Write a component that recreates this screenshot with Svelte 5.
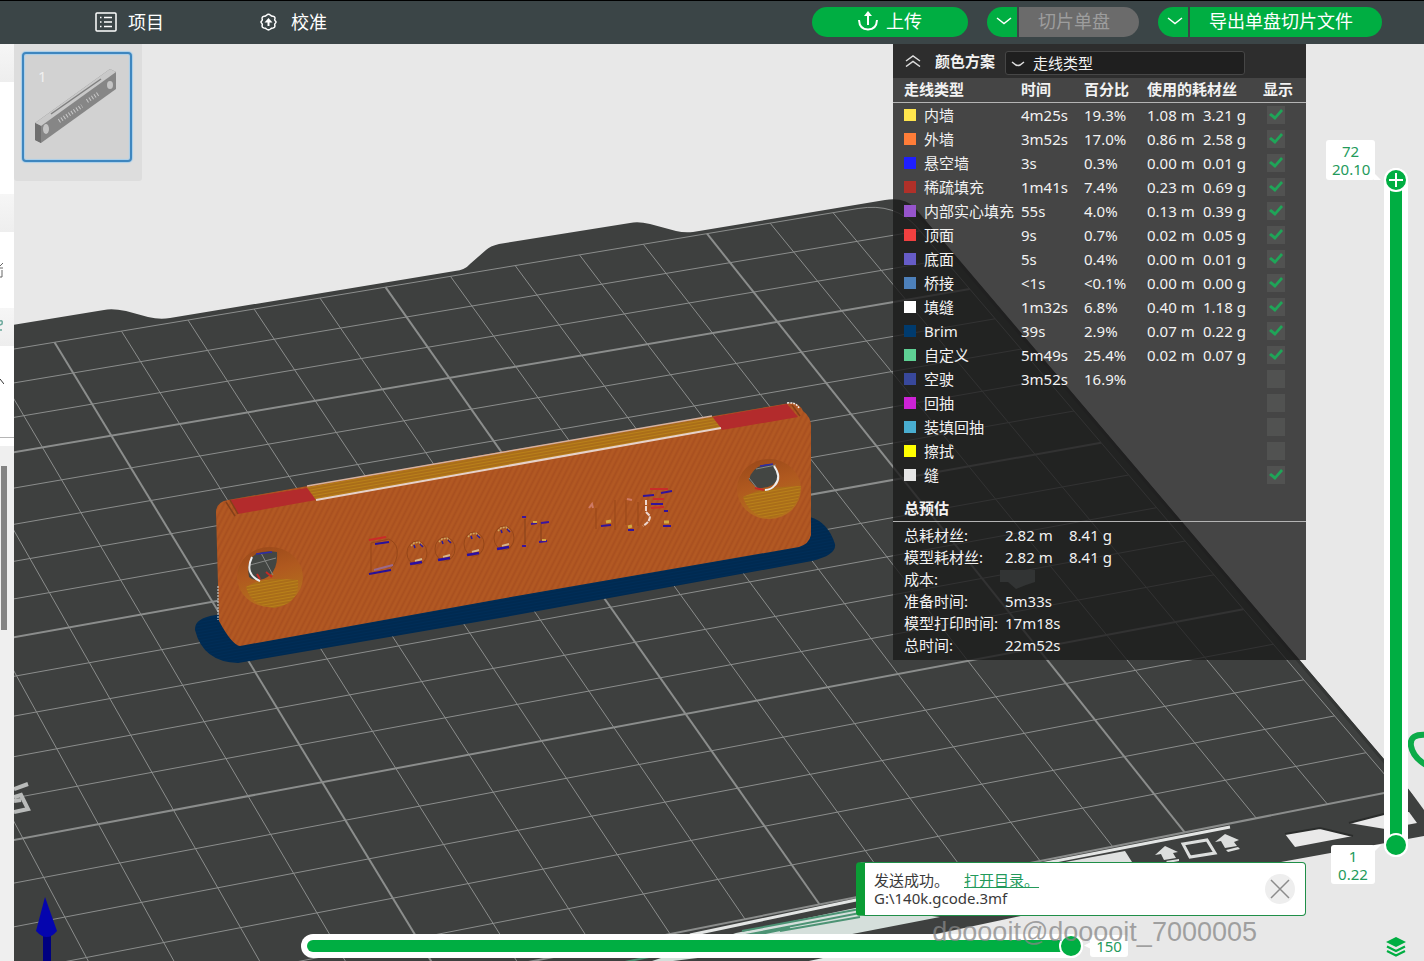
<script lang="ts">
	type LineType = {
		name: string;
		color: string;
		time?: string;
		percent?: string;
		length?: string;
		weight?: string;
		visible: boolean;
	};

	let lineTypes = $state<LineType[]>([
		{ name: '内墙', color: '#ffe54d', time: '4m25s', percent: '19.3%', length: '1.08 m', weight: '3.21 g', visible: true },
		{ name: '外墙', color: '#ff7d38', time: '3m52s', percent: '17.0%', length: '0.86 m', weight: '2.58 g', visible: true },
		{ name: '悬空墙', color: '#1f1fff', time: '3s', percent: '0.3%', length: '0.00 m', weight: '0.01 g', visible: true },
		{ name: '稀疏填充', color: '#b03029', time: '1m41s', percent: '7.4%', length: '0.23 m', weight: '0.69 g', visible: true },
		{ name: '内部实心填充', color: '#9654cc', time: '55s', percent: '4.0%', length: '0.13 m', weight: '0.39 g', visible: true },
		{ name: '顶面', color: '#f04040', time: '9s', percent: '0.7%', length: '0.02 m', weight: '0.05 g', visible: true },
		{ name: '底面', color: '#665cc7', time: '5s', percent: '0.4%', length: '0.00 m', weight: '0.01 g', visible: true },
		{ name: '桥接', color: '#4d80ba', time: '<1s', percent: '<0.1%', length: '0.00 m', weight: '0.00 g', visible: true },
		{ name: '填缝', color: '#ffffff', time: '1m32s', percent: '6.8%', length: '0.40 m', weight: '1.18 g', visible: true },
		{ name: 'Brim', color: '#003b6e', time: '39s', percent: '2.9%', length: '0.07 m', weight: '0.22 g', visible: true },
		{ name: '自定义', color: '#5ed194', time: '5m49s', percent: '25.4%', length: '0.02 m', weight: '0.07 g', visible: true },
		{ name: '空驶', color: '#38489b', time: '3m52s', percent: '16.9%', visible: false },
		{ name: '回抽', color: '#cd22d6', visible: false },
		{ name: '装填回抽', color: '#49adcf', visible: false },
		{ name: '擦拭', color: '#ffff00', visible: false },
		{ name: '缝', color: '#e6e6e6', visible: true }
	]);

	const totals = [
		{ label: '总耗材丝:', value: '2.82 m', extra: '8.41 g' },
		{ label: '模型耗材丝:', value: '2.82 m', extra: '8.41 g' },
		{ label: '成本:', value: '', extra: '' },
		{ label: '准备时间:', value: '5m33s', extra: '' },
		{ label: '模型打印时间:', value: '17m18s', extra: '' },
		{ label: '总时间:', value: '22m52s', extra: '' }
	];

	let topLayer = $state(72);
	let bottomLayer = $state(1);
	let move = $state(150);
	let toastOpen = $state(true);
	let panelOpen = $state(true);

	// bed coordinates (cells of 10 mm) -> screen, simple perspective camera
	function project(col: number, row: number): string {
		const u = col / 10;
		const v = row / 18;
		const w = 1 + 0.02927 * u - 0.14027 * v;
		const x = (673.2 * u + 325.5 * v + 54.5) / w;
		const y = (-101.76 * u + 499.4 * v + 342.3) / w;
		return `${x.toFixed(1)} ${y.toFixed(1)}`;
	}

	const columns = Array.from({ length: 17 }, (_, i) => i - 4);
	const rows = Array.from({ length: 18 }, (_, i) => i + 1);

	// centres of the four round engraved letters
	const rings = [
		[417, 553],
		[445, 549],
		[474, 544],
		[504, 538]
	];
</script>

<div class="app">
	<header>
		<nav>
			<button class="tab">
				<svg width="22" height="20" viewBox="0 0 22 20" fill="none" stroke="#fff" stroke-width="1.5">
					<rect x="1" y="1" width="20" height="18" rx="1" />
					<path d="M9 5.5h8M9 10h8M9 14.5h8M5 5.5h1.5M5 10h1.5M5 14.5h1.5" />
				</svg>
				项目
			</button>
			<button class="tab">
				<svg class="gear" width="17" height="18" viewBox="0 0 17 18" fill="none" stroke="#fff" stroke-width="1.5">
					<path d="M6.500 2.200Q8.500 .4 10.500 2.200Q11.500 3.300 13 3.200Q15.500 3.500 14.800 6Q14.400 7.300 15.500 8.200Q16.500 9 15.500 10Q14.400 11 14.800 12.200Q15.300 14.700 13 14.900Q11.500 14.900 10.500 16Q8.500 17.700 6.500 16Q5.500 14.900 4 14.900Q1.700 14.700 2.200 12.200Q2.600 11 1.500 10Q.5 9 1.500 8.200Q2.600 7.300 2.200 6Q1.700 3.500 4 3.200Q5.500 3.300 6.500 2.200Z" />
					<path d="M8.5 13V7" stroke-width="2" />
					<path d="M4.5 9.500L8.500 5L12.500 9.500Z" fill="#fff" stroke="none" />
				</svg>
				校准
			</button>
		</nav>
		<div class="actions">
			<button class="pill upload">
				<svg width="20" height="22" viewBox="0 0 20 22" fill="none" stroke="#fff" stroke-width="2">
					<path d="M1 10Q1.500 19.500 10 19.500T19 10M10 15V4" />
					<path d="M6 6L10 1L14 6Z" fill="#fff" stroke="none" />
				</svg>
				上传
			</button>
			<div class="split">
				<button class="drop" aria-label="切片">
					<svg width="16" height="8" viewBox="0 0 16 8" fill="none" stroke="#fff" stroke-width="1.5"><path d="M1 1L8 6.500L15 1" /></svg>
				</button>
				<button class="main slice" disabled>切片单盘</button>
			</div>
			<div class="split">
				<button class="drop" aria-label="导出">
					<svg width="16" height="8" viewBox="0 0 16 8" fill="none" stroke="#fff" stroke-width="1.5"><path d="M1 1L8 6.500L15 1" /></svg>
				</button>
				<button class="main export">导出单盘切片文件</button>
			</div>
		</div>
	</header>

	<div class="workspace">
		<aside>
			<div class="band"></div>
			<div class="first"></div>
			<div class="band"></div>
			<div class="second">
				<svg width="4" height="20" viewBox="0 0 4 20" fill="none" stroke="#666"><path d="M0 4L3 1M0 6H3M2 8V15H0" /></svg>
			</div>
			<div class="band">
				<svg width="4" height="20" viewBox="0 0 4 20" fill="none" stroke="#6aa89b" stroke-width="1.5"><path d="M0 7Q3 6 2 10L0 11M0 16H2" /></svg>
			</div>
			<div class="third">
				<svg width="4" height="8" viewBox="0 0 4 8" fill="none" stroke="#333"><path d="M0 1L4 6" /></svg>
			</div>
			<div class="scroll"><div class="scrollbar"></div></div>
		</aside>

		<main>
			<svg class="scene" viewBox="14 44 1410 917" preserveAspectRatio="xMinYMin slice" aria-hidden="true">
				<defs>
					<pattern id="wall" width="5" height="8" patternUnits="userSpaceOnUse" patternTransform="rotate(27)">
						<rect width="5" height="8" fill="#ae5421" />
						<path d="M1 0V8" stroke="#b75d24" stroke-width="1" />
						<path d="M3.5 0V8" stroke="#a85020" stroke-width="1" />
					</pattern>
					<pattern id="layers" width="8" height="3" patternUnits="userSpaceOnUse" patternTransform="rotate(-10)">
						<rect width="8" height="3" fill="#b98019" />
						<path d="M0 1H8" stroke="#9c5b18" stroke-width="1" />
					</pattern>
					<pattern id="brim" width="8" height="3" patternUnits="userSpaceOnUse" patternTransform="rotate(-10)">
						<rect width="8" height="3" fill="#002d57" />
						<path d="M0 1H8" stroke="#00264b" />
					</pattern>
					<linearGradient id="cone" x1="0" y1="0" x2="0.3" y2="1">
						<stop offset="0" stop-color="#984719" />
						<stop offset="0.5" stop-color="#b0591f" />
						<stop offset="1" stop-color="#b4701d" />
					</linearGradient>
				</defs>

				<path
					d="M0 327L104 310Q112 308 126 311L148 317Q160 320 170 318L455 271Q465 270 470 264L486 250Q490 246 499 244L630 223Q638 221 650 224L676 231Q684 233 693 232L885 200Q905 197 915 208L1395 772L1424 808V836L1281 862L1016 917L790 965H0Z"
					fill="#3e403f"
				/>
				<path d="M916 212L1393 772" fill="none" stroke="#343635" stroke-width="3" />

				<g fill="none" stroke="#8b8d8c">
					{#each columns as c}
						<path d="M{project(c, 0)}L{project(c, 18)}" stroke-width={c % 5 === 0 ? 2 : 1} />
					{/each}
					{#each rows as r}
						<path d="M{project(-5, r)}L{project(13, r)}" stroke-width={r % 5 === 3 ? 2 : 1} />
					{/each}
					<path d="M{project(-5, 0)}L{project(12.4, 0)}Q{project(13, 0)} {project(13, 0.9)}L{project(13, 18)}" />
				</g>

				<!-- front strip of the plate -->
				<path d="M690 935L856 900L1230 827" stroke="#e3e5e4" stroke-width="3" fill="none" />
				<path d="M736 933L860 907L940 917L780 948L640 965Z" fill="#d5dfdb" />
				<path d="M742 931L860 909M740 936L860 913M620 963L790 928M780 931L860 917" stroke="#4c9374" stroke-width="2" fill="none" />
				<path d="M1060 863L1125 851L1132 862V870H1060Z" fill="#dfe1e0" />
				<g fill="#dcdedd">
					<path d="M1165 846L1178 852L1173 853L1176 858L1164 860L1161 854L1155 855Z" />
					<path d="M1166 861L1179 859V861L1168 863Z" />
					<path d="M1225 834L1239 840L1234 842L1237 846L1225 848L1221 841L1215 842Z" />
					<path d="M1226 850L1238 847L1240 849L1228 852Z" />
					<path d="M1285 834L1320 828L1353 836L1295 847Z" fill="#e9e9e9" />
					<path d="M1349 823L1388 813L1409 812L1417 823L1385 829Z" fill="#e9e9e9" />
				</g>
				<path d="M1183 844L1207 840L1215 853L1190 857Z" fill="none" stroke="#dcdedd" stroke-width="3" />
				<path d="M1285 834L1320 828L1353 836M1349 823L1384 814" fill="none" stroke="#2b2d2c" stroke-width="2" />
				<path d="M14 789L28 784M14 797L21 795L28 809L14 812M14 801L21 800" fill="none" stroke="#b9bbba" stroke-width="4" />
				<path d="M1408 788L1424 810V750H1408Z" fill="#e8e8e8" />
				<path d="M1428 735Q1409 733 1411 746Q1413 758 1428 766" fill="none" stroke="#0bab48" stroke-width="6" />

				<!-- brim -->
				<path
					d="M216 615Q194 618 195 630Q203 662 238 663L500 618L812 561Q837 555 835 544Q828 522 810 517Z"
					fill="url(#brim)"
				/>

				<!-- printed part -->
				<path
					d="M216 512Q216 502 228 500L500 452L790 403Q799 402 803 411Q811 417 811 426V535Q809 544 799 547L500 599L240 646Q232 645 219 621Z"
					fill="url(#wall)"
				/>
				<path d="M230 500L307 488L316 500L238 514Z" fill="#b32b2c" />
				<path d="M713 417L787 404L798 417L722 430Z" fill="#b32b2c" />
				<path d="M307 487L712 417L721 428L316 500Z" fill="url(#layers)" />
				<path d="M307 486L712 416" stroke="#d5b3a0" stroke-width="1.5" />
				<path d="M316 500L721 428" stroke="#e6d2ca" stroke-width="2" />
				<path d="M226 502L235 516M230 500L238 514" stroke="#84401a" stroke-width="1.5" />
				<path d="M792 405L800 416" stroke="#84401a" stroke-width="1.5" />
				<path d="M787 403Q796 402 799 408" fill="none" stroke="#eee" stroke-width="1.5" stroke-dasharray="2 1" />
				<path d="M218 586V620" stroke="#ddd" stroke-width="1" stroke-dasharray="2 1" />

				<ellipse cx="270" cy="577" rx="33" ry="30" fill="url(#cone)" />
				<path d="M246 587Q262 576 298 580Q300 604 274 608Q251 606 246 587Z" fill="url(#layers)" />
				<path d="M249 577Q246 560 256 554Q265 550 277 552Q278 568 270 575Q262 582 252 579Z" fill="#434643" />
				<path d="M261 553L273 575M250 565L276 558" stroke="#858785" />
				<path d="M252 557Q244 574 260 581" fill="none" stroke="#eee" stroke-width="2" />
				<path d="M256 554L272 552" stroke="#302ca8" stroke-width="1.5" />
				<path d="M257 574L260 579M266 572L272 577" stroke="#c62a25" stroke-width="2" />

				<ellipse cx="769" cy="489" rx="32" ry="30" fill="url(#cone)" />
				<path d="M743 497Q760 487 801 486Q800 512 771 518Q749 516 743 497Z" fill="url(#layers)" />
				<path d="M749 480Q752 466 768 464Q779 465 778 478Q774 489 757 488Z" fill="#434643" />
				<path d="M749 478L757 488M756 469L776 465" stroke="#858785" />
				<path d="M774 466Q782 477 775 485Q771 490 765 490" fill="none" stroke="#eee" stroke-width="2" />
				<path d="M760 466L773 464" stroke="#302ca8" stroke-width="1.5" />
				<path d="M755 488L764 490" stroke="#c62a25" stroke-width="2" />

				<!-- engraving -->
				<path d="M371 543L389 539Q399 544 397 556Q395 566 389 570L371 574Z" fill="none" stroke="#974719" />
				<path d="M369 540L386 537" stroke="#cb2a28" stroke-width="2" />
				<path d="M375 544L389 542M369 574L391 570" stroke="#27109b" stroke-width="2" />
				<path d="M374 570L393 565" stroke="#9a698d" stroke-width="2" />
				{#each rings as [x, y]}
					<ellipse cx={x} cy={y} rx="10" ry="12" fill="none" stroke="#974719" />
					<path d="M{x - 6} {y - 7}l3 -3l5 -1l3 3" fill="none" stroke="#cfa862" stroke-width="1.5" stroke-dasharray="2 1" />
					<path d="M{x - 3} {y - 8}l1 3M{x + 3} {y - 9}l3 3" stroke="#2c1a9a" stroke-width="1.5" />
					<path d="M{x - 2} {y + 8}l7 -2" stroke="#d6b689" stroke-width="2" />
					<path d="M{x - 7} {y + 11}l12 -2" stroke="#2a0fa4" stroke-width="2.5" />
				{/each}
				<path d="M525 519V544M541 522V541" stroke="#84401a" />
				<path d="M522 517h4M522 546h4M531 524l6 -1M541 523l8 -1M539 542l8 -1" stroke="#3b159d" stroke-width="2" />
				<path d="M533 522h4M542 540h4" stroke="#d2a942" stroke-width="2" />
				<path d="M596 508V529M615 500V530M626 500V525M638 502V526" stroke="#974719" />
				<path d="M589 508l3 -4l1 4M627 499l5 1" fill="none" stroke="#cf7a64" stroke-width="2" />
				<path d="M601 526l10 -1M628 530h6M663 526h8M643 496l11 -1M661 493l11 -2M651 504h12M664 511h4" stroke="#32139b" stroke-width="2" />
				<path d="M606 522l5 -1M628 527l4 -1M664 522h5" stroke="#d2a942" stroke-width="3" />
				<path d="M646 500V512L650 516Q650 522 643 526" fill="none" stroke="#eed7cf" stroke-width="2" stroke-dasharray="5 1" />
				<path d="M650 489h18M651 508l13 -1M653 499h11" stroke="#c92c29" stroke-width="2" />

				<!-- z axis -->
				<path d="M43 934H51V961H43Z" fill="#000080" />
				<path d="M45 897L57 931Q47 943 36 931Z" fill="#0505ae" />
			</svg>

			<button class="plate" aria-label="1">
				<span class="plate-frame">
					<span class="plate-number">1</span>
					<svg width="106" height="106" viewBox="24 54 106 106">
						<path d="M35 123L110 69L116 72V89L41 143L35 140Z" fill="#868686" />
						<path d="M35 123L110 69L116 72L41 126Z" fill="#c9c9c9" />
						<path d="M51 114L101 79" stroke="#808080" stroke-width="1.5" />
						<path d="M35 123L41 126V143L35 140Z" fill="#6f6f6f" />
						<ellipse cx="46" cy="129" rx="3" ry="5" fill="#c4c4c4" />
						<ellipse cx="110" cy="85" rx="3" ry="4" fill="#c4c4c4" />
						<path d="M59 121L82 106M87 101L98 94" stroke="#c9c9c9" stroke-width="4" stroke-dasharray="1 2" />
					</svg>
				</span>
			</button>

			<section class="panel">
				<div class="panel-head">
					<button class="collapse" aria-label="折叠" onclick={() => (panelOpen = !panelOpen)}>
						<svg width="16" height="12" viewBox="0 0 16 12" fill="none" stroke="#ddd" stroke-width="1.5"><path d="M1 6L8 1L15 6M1 11.5L8 6.5L15 11.5" /></svg>
					</button>
					<label for="scheme">颜色方案</label>
					<div class="select">
						<svg width="14" height="6" viewBox="0 0 14 6" fill="none" stroke="#ddd" stroke-width="1.5"><path d="M1 1L5 4Q7 5 9 4L13 1" /></svg>
						<select id="scheme">
							<option>走线类型</option>
						</select>
					</div>
				</div>
				{#if panelOpen}
					<table class="types">
						<colgroup>
							<col class="c-name" />
							<col class="c-time" />
							<col class="c-time" />
							<col class="c-length" />
							<col class="c-weight" />
							<col />
						</colgroup>
						<thead>
							<tr>
								<th class="name">走线类型</th>
								<th>时间</th>
								<th>百分比</th>
								<th colspan="2">使用的耗材丝</th>
								<th>显示</th>
							</tr>
						</thead>
						<tbody>
							{#each lineTypes as t}
								<tr>
									<td class="name"><i style="background: {t.color}"></i>{t.name}</td>
									<td>{t.time ?? ''}</td>
									<td>{t.percent ?? ''}</td>
									<td>{t.length ?? ''}</td>
									<td>{t.weight ?? ''}</td>
									<td class="show"><input type="checkbox" aria-label={t.name} bind:checked={t.visible} /></td>
								</tr>
							{/each}
						</tbody>
					</table>
					<h2>总预估</h2>
					<table class="totals">
						<tbody>
							{#each totals as t}
								<tr>
									<th>{t.label}</th>
									<td>
										{#if t.label === '成本:'}
											<svg width="40" height="20" viewBox="0 0 40 20"><path d="M-5 1H35V13L26 16L16 20L8 13H-5Z" fill="#323434" /></svg>
										{:else}
											{t.value}
										{/if}
									</td>
									<td>{t.extra}</td>
								</tr>
							{/each}
						</tbody>
					</table>
				{/if}
			</section>

			<div class="layer-slider">
				<output class="tip upper">72<br />20.10</output>
				<output class="tip lower">1<br />0.22</output>
				<div class="bar"></div>
				<input class="high" type="range" min="1" max="72" aria-label="72" bind:value={topLayer} />
				<input type="range" min="1" max="72" aria-label="1" bind:value={bottomLayer} />
			</div>

			<div class="move-slider">
				<div class="bar"></div>
				<input type="range" min="0" max="150" aria-label="150" bind:value={move} />
				<output class="tip">{move}</output>
			</div>

			{#if toastOpen}
				<div class="toast" role="status">
					<div>
						<p>发送成功。<a href="#folder">打开目录。</a></p>
						<p>G:\140k.gcode.3mf</p>
					</div>
					<button aria-label="关闭" onclick={() => (toastOpen = false)}>
						<svg width="20" height="20" viewBox="0 0 20 20" stroke="#8c8c8c" stroke-width="1.5"><path d="M1 1L19 19M19 1L1 19" /></svg>
					</button>
				</div>
			{/if}

			<button class="layers" aria-label="图层">
				<svg width="20" height="20" viewBox="0 0 20 20">
					<path d="M10 0L20 5L10 10L0 5Z" fill="#00ae42" />
					<path d="M1 9.5L10 14L19 9.5M1 14L10 18.5L19 14" fill="none" stroke="#00ae42" stroke-width="2.2" />
				</svg>
			</button>

			<div class="watermark">dooooit@dooooit_7000005</div>
		</main>
	</div>
</div>

<style>
	:global(body) {
		background: #e8e8e8;
	}

	.app {
		display: flex;
		flex-direction: column;
		height: 100vh;
		min-height: 760px;
		overflow: hidden;
		font-family: 'Noto Sans', 'Noto Sans CJK SC', sans-serif;
		font-size: 15px;
	}

	button {
		font: inherit;
		color: inherit;
		border: 0;
		padding: 0;
		background: none;
		display: flex;
		align-items: center;
		justify-content: center;
	}

	header {
		box-sizing: border-box;
		flex: none;
		height: 44px;
		display: flex;
		align-items: center;
		justify-content: space-between;
		padding: 0 42px 2px 95px;
		border-top: 1px solid #000;
		background: #3b4547;
		color: #fff;
		font-size: 18px;
	}

	nav {
		display: flex;
		gap: 96px;
	}

	.tab {
		gap: 11px;
		line-height: 26px;
	}

	.gear {
		margin-right: 3px;
	}

	.actions {
		display: flex;
		gap: 19px;
	}

	.pill,
	.drop,
	.main {
		height: 30px;
		padding-bottom: 2px;
		background: #00ae42;
		color: #fff;
		line-height: 26px;
	}

	.upload {
		width: 156px;
		gap: 8px;
		border-radius: 15px;
	}

	.split {
		display: flex;
		gap: 2px;
	}

	.drop {
		width: 30px;
		padding-left: 4px;
		border-radius: 15px 0 0 15px;
	}

	.main {
		border-radius: 0 15px 15px 0;
	}

	.slice {
		width: 120px;
		padding-right: 10px;
		background: #6b6b6b;
		color: #9d9d9d;
	}

	.export {
		width: 192px;
		padding-right: 10px;
	}

	.workspace {
		flex: 1;
		display: flex;
		min-height: 0;
	}

	aside {
		flex: none;
		width: 14px;
		display: flex;
		flex-direction: column;
		background: #fff;
	}

	aside > div {
		box-sizing: border-box;
	}

	aside svg {
		display: block;
	}

	.band {
		height: 38px;
		padding-top: 6px;
		background: linear-gradient(#f6f6f6, #eeeeee);
	}

	.first {
		height: 112px;
	}

	.second {
		height: 76px;
		padding-top: 30px;
	}

	.third {
		height: 92px;
		padding-top: 32px;
		border-bottom: 1px solid #b5b5b5;
	}

	.scroll {
		flex: 1;
		margin-top: 8px;
		padding: 20px 0 0 1px;
		background: #efefef;
	}

	.scrollbar {
		width: 6px;
		height: 164px;
		background: #838383;
	}

	main {
		position: relative;
		flex: 1;
		min-width: 0;
		overflow: hidden;
		background: #e8e8e8;
	}

	.scene {
		display: block;
		width: 100%;
		height: 100%;
	}

	.plate {
		position: absolute;
		top: 0;
		left: 0;
		width: 128px;
		height: 137px;
		padding: 8px;
		align-items: flex-start;
		justify-content: flex-start;
		border-radius: 0 0 3px 3px;
		background: #dddddd;
	}

	.plate-frame {
		position: relative;
		display: block;
		width: 106px;
		height: 106px;
		border: 2px solid #3e86bf;
		border-radius: 4px;
		background: #d2d2d2;
		box-shadow: 0 0 1px 1px #a9cfea, inset 0 0 1px 1px #a9cfea;
	}

	.plate-frame svg {
		display: block;
	}

	.plate-number {
		position: absolute;
		top: 12px;
		left: 14px;
		line-height: 20px;
		color: #f0f0f0;
	}

	.panel {
		position: absolute;
		top: 0;
		right: 118px;
		width: 413px;
		box-sizing: border-box;
		padding-bottom: 4px;
		background: rgba(27, 27, 27, 0.8);
		color: #f2f2f2;
	}

	.panel-head {
		display: flex;
		align-items: center;
		height: 34px;
		background: rgba(25, 25, 25, 0.55);
	}

	.collapse {
		width: 16px;
		margin: 0 14px 0 12px;
	}

	.panel-head label {
		width: 70px;
		line-height: 24px;
		font-weight: 700;
	}

	.select {
		position: relative;
		width: 240px;
		height: 24px;
		margin-top: 4px;
	}

	.select svg {
		position: absolute;
		top: 10px;
		left: 6px;
		pointer-events: none;
	}

	select {
		appearance: none;
		box-sizing: border-box;
		width: 100%;
		height: 24px;
		padding: 0 0 0 27px;
		border: 1px solid #464646;
		border-radius: 3px;
		background: #1f1f1f;
		color: #f2f2f2;
		font: inherit;
		line-height: 22px;
	}

	table {
		width: 100%;
		border-spacing: 0;
		table-layout: fixed;
		text-align: left;
	}

	th,
	td {
		padding: 0;
		white-space: nowrap;
	}

	.types td {
		height: 24px;
		line-height: 24px;
	}

	.types thead th {
		height: 24px;
		border-bottom: 1px solid #b4b4b4;
		line-height: 22px;
		vertical-align: top;
	}

	.c-name {
		width: 128px;
	}

	.c-time {
		width: 63px;
	}

	.c-length {
		width: 56px;
	}

	.c-weight {
		width: 60px;
	}

	.name {
		padding-left: 11px;
	}

	.name i {
		display: inline-block;
		width: 12px;
		height: 12px;
		margin-right: 8px;
	}

	.types .show {
		padding-left: 4px;
	}

	.types input {
		appearance: none;
		display: block;
		width: 18px;
		height: 18px;
		margin: 0;
		background: #515251;
	}

	.types input:checked::after {
		content: '';
		display: block;
		width: 18px;
		height: 18px;
		background: #1fa558;
		clip-path: polygon(2px 9px, 4px 7px, 8px 10px, 14px 3px, 16px 5px, 8px 14px);
	}

	h2 {
		margin: 0;
		padding: 9px 11px 1px;
		border-bottom: 1px solid #b4b4b4;
		font-size: 15px;
		line-height: 24px;
	}

	.totals {
		margin-top: 2px;
	}

	.totals tr {
		height: 22px;
		line-height: 22px;
	}

	.totals th {
		width: 101px;
		padding-left: 11px;
		font-weight: 400;
	}

	.totals td:nth-child(2) {
		width: 64px;
	}

	.totals svg {
		display: block;
		margin-left: -5px;
	}

	.tip {
		position: absolute;
		box-sizing: border-box;
		padding: 2px 6px;
		border-radius: 3px;
		background: #fff;
		color: #239a5b;
		line-height: 18px;
		text-align: center;
	}

	.layer-slider {
		position: absolute;
		top: 124px;
		right: 16px;
		bottom: 104px;
		width: 24px;
		border-radius: 12px;
		background: #fff;
	}

	.layer-slider .bar {
		position: absolute;
		inset: 12px 6px;
		background: #00ae42;
	}

	.upper {
		top: -28px;
		right: 33px;
		width: 49px;
		height: 40px;
	}

	.lower {
		right: 33px;
		bottom: -27px;
		width: 44px;
		height: 39px;
	}

	.tip::after {
		content: '';
		position: absolute;
		width: 7px;
		height: 7px;
		background: #fff;
	}

	.upper::after {
		right: -6px;
		bottom: 0;
		clip-path: polygon(0 0, 100% 100%, 0 100%);
	}

	.lower::after {
		right: -6px;
		top: 0;
		clip-path: polygon(0 0, 100% 0, 0 100%);
	}

	input[type='range'] {
		appearance: none;
		position: absolute;
		inset: 0;
		width: 100%;
		height: 100%;
		margin: 0;
		background: none;
		pointer-events: none;
	}

	.layer-slider input {
		writing-mode: vertical-lr;
		direction: rtl;
	}

	input[type='range']::-webkit-slider-thumb {
		appearance: none;
		box-sizing: border-box;
		width: 24px;
		height: 24px;
		border: 2px solid #fff;
		border-radius: 50%;
		background: #00ae42;
		pointer-events: auto;
	}

	input.high::-webkit-slider-thumb {
		background:
			linear-gradient(#fff, #fff) center / 14px 2px no-repeat,
			linear-gradient(#fff, #fff) center / 2px 14px no-repeat,
			#00ae42;
	}

	.move-slider {
		position: absolute;
		right: 341px;
		bottom: 3px;
		left: 287px;
		height: 24px;
		border-radius: 12px;
		background: #fff;
	}

	.move-slider .bar {
		position: absolute;
		inset: 6px;
		border-radius: 6px;
		background: #00ae42;
	}

	.move-slider .tip {
		left: 100%;
		top: 1px;
		width: 38px;
		height: 22px;
		margin-left: 7px;
	}

	.move-slider .tip::after {
		left: -6px;
		top: 7px;
		clip-path: polygon(100% 0, 0 50%, 100% 100%);
	}

	.toast {
		position: absolute;
		right: 118px;
		bottom: 45px;
		box-sizing: border-box;
		width: 450px;
		height: 54px;
		display: flex;
		align-items: center;
		justify-content: space-between;
		padding: 0 10px 0 9px;
		border: 1px solid #1f8f48;
		border-left: 9px solid #0b9c35;
		border-radius: 4px;
		background: #fff;
		color: #3a3a3a;
	}

	.toast p {
		margin: 0;
		line-height: 18px;
	}

	.toast a {
		margin-left: 15px;
		color: #239a5b;
	}

	.toast button {
		width: 30px;
		height: 30px;
		border-radius: 50%;
		background: #eeeeee;
	}

	.layers {
		position: absolute;
		right: 18px;
		bottom: 4px;
	}

	.watermark {
		position: absolute;
		right: 167px;
		bottom: 14px;
		font-family: 'Liberation Sans', sans-serif;
		font-size: 27px;
		line-height: 30px;
		color: rgba(135, 135, 135, 0.75);
		pointer-events: none;
	}
</style>
